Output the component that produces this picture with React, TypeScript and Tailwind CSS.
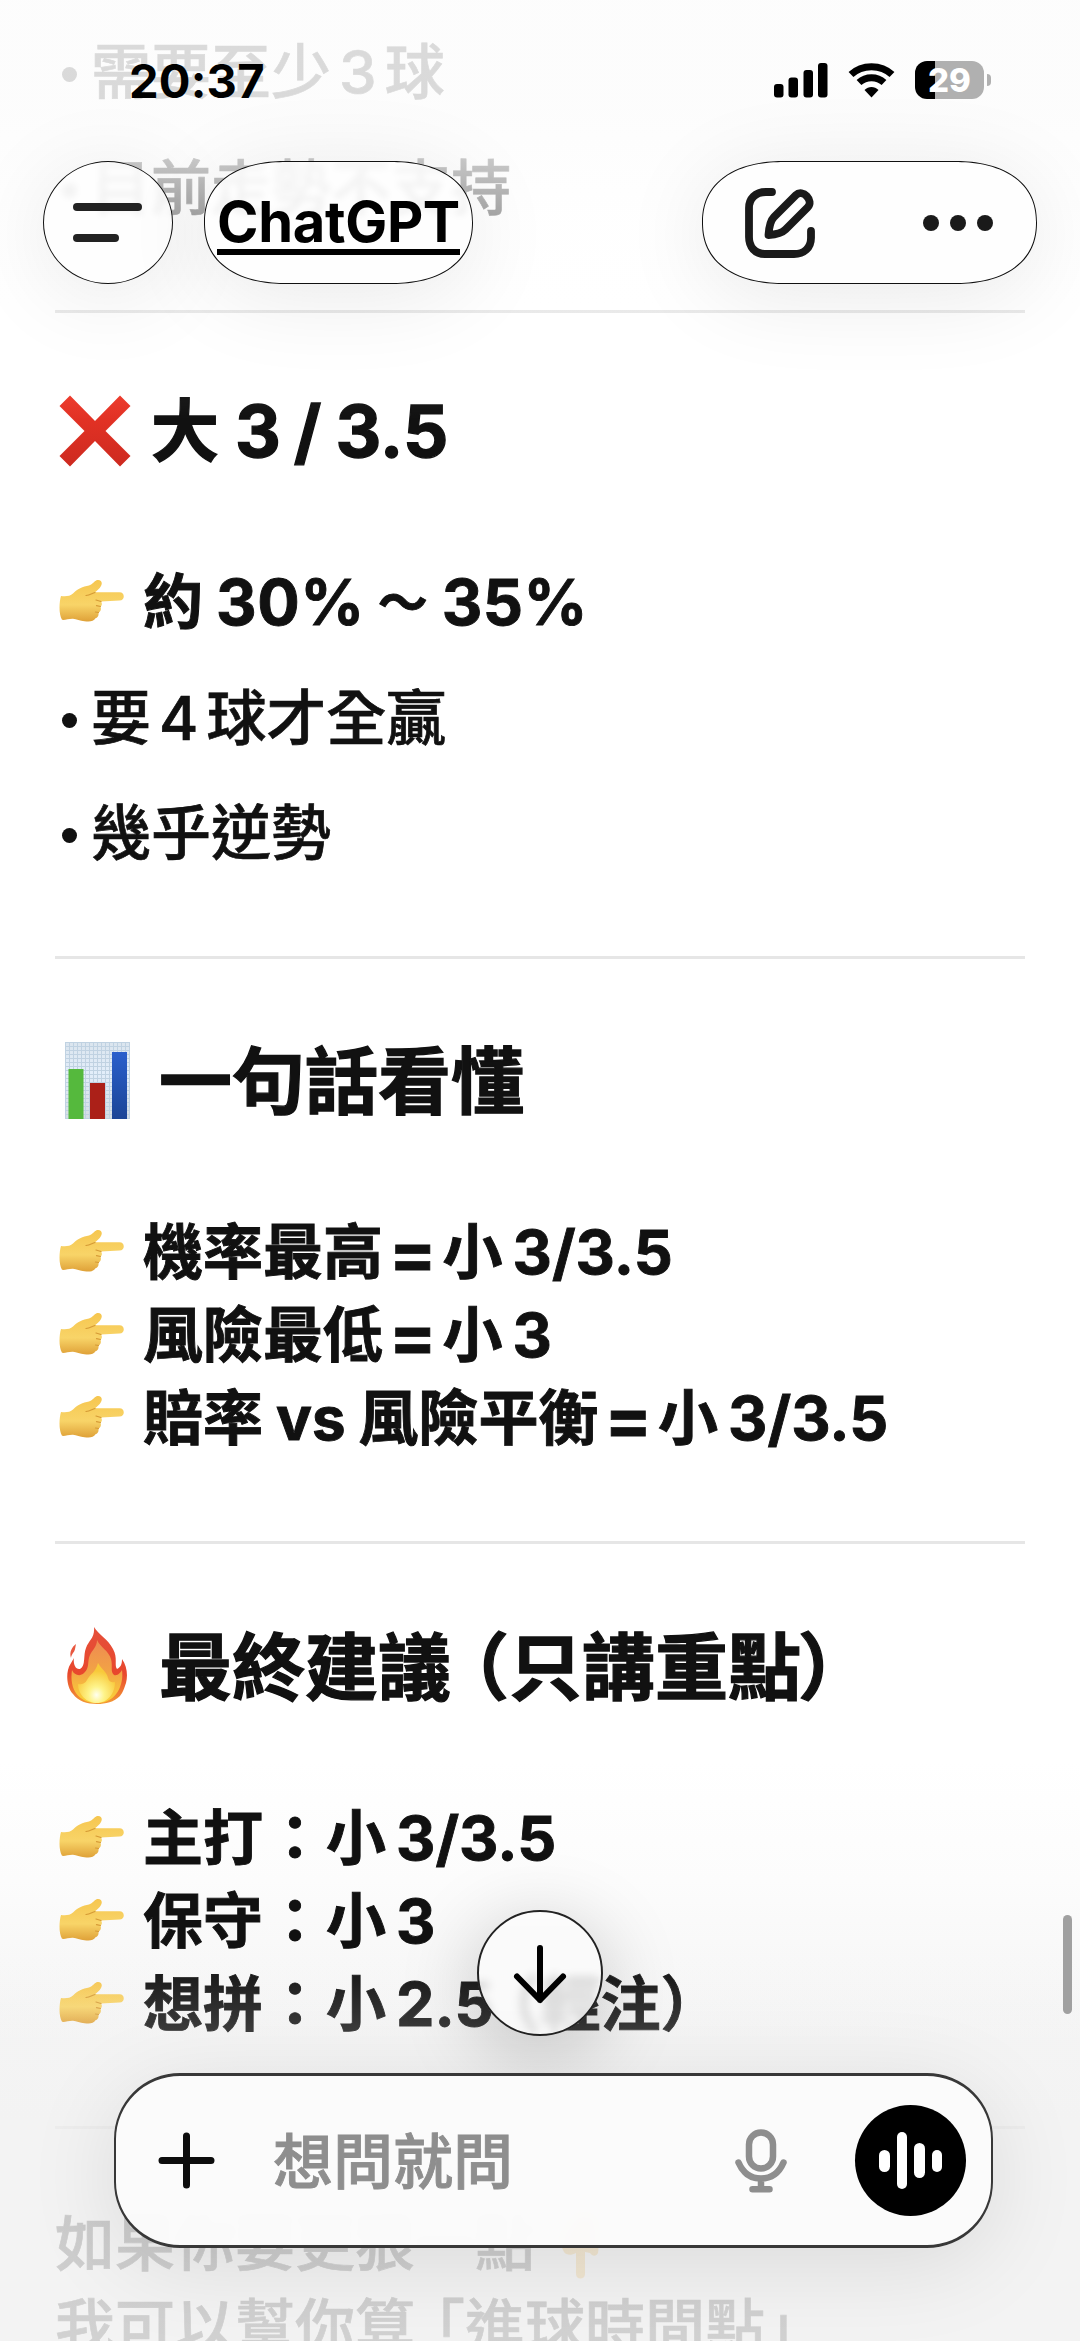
import { ReactNode } from "react";

interface RowProps {
  children: ReactNode;
  className?: string;
}

const PointRight = () => (
  <svg width="66" height="44" viewBox="0 0 66 44" className="mb-[3px] ml-[4px] mr-[18px] shrink-0">
    <defs>
      <linearGradient id="skin" x1="0" y1="0" x2="0" y2="1">
        <stop offset="0" stopColor="#f6c64f" />
        <stop offset="0.6" stopColor="#f8d468" />
        <stop offset="1" stopColor="#dfa138" />
      </linearGradient>
    </defs>
    <path
      d="M2 17c4 .8 9 .4 12-2.400C18 10 24 7.500 30 6.500c3-1 5-4 8-5.500 4-.8 6 2.500 4 6-1.500 3-4 4.500-6 6.300h24.500c5.700 0 5.700 8.200 0 8.200L42 22.500c1.500 2 1 4-.5 5 1 3 0 5-2 6 .5 3-1 5-3 5.800-2 3.500-6 3.500-11 3-4.500-.3-8-2-11.500-2.500-4-.2-8 1.500-11 1C-.3 35 0 24 2 17z"
      fill="url(#skin)"
    />
    <path d="M36 13.500c-3 .8-5 2.500-9 3M42 22.500l-5-1.500M41.500 27.500l-4-.8M39.500 33.500l-3-.5" stroke="#d59a35" strokeWidth="1.200" fill="none" strokeLinecap="round" />
  </svg>
);

const PointDown = () => (
  <svg width="44" height="66" viewBox="0 0 44 66" className="ml-[22px] mt-[4px] shrink-0">
    <path d="M17 2c7-2 14-1 22 1-1 8 3 13 2 21 0 5 1 12 0 16-2 4-6 3-8 0l-5-1v22c0 6-9 6-9 0V40c-5 3-10 2-12-1-4-6-4-15-1-20 3-4 9-11 11-16z" fill="#e9a52a" />
  </svg>
);

const Cross = () => (
  <svg width="72" height="72" viewBox="0 0 72 72" className="mb-[2px] ml-[4px] mr-[20px] shrink-0">
    <defs>
      <linearGradient id="cross" x1="0" y1="0" x2="0" y2="1">
        <stop offset="0" stopColor="#ec3526" />
        <stop offset="1" stopColor="#cd2a20" />
      </linearGradient>
    </defs>
    <path d="M11 .5L36 26 61 .5 71.500 11 46.500 36l25 25L61 71.500 36 46 11 71.500.5 61l25-25-25-25z" fill="url(#cross)" />
  </svg>
);

const BarChart = () => (
  <svg width="65" height="77" viewBox="0 0 65 77" className="mb-[3px] ml-[10px] mr-[29px] shrink-0">
    <defs>
      <pattern id="grid" width="4" height="4" patternUnits="userSpaceOnUse">
        <path d="M0 .5H4M.5 0V4" stroke="#c0d2e2" strokeWidth="1" />
      </pattern>
      <linearGradient id="paper" x1="0" y1="0" x2="0" y2="1">
        <stop offset="0" stopColor="#dbe5ee" />
        <stop offset="0.4" stopColor="#e3eefa" />
        <stop offset="1" stopColor="#d5dde3" />
      </linearGradient>
      <linearGradient id="blue" x1="0" y1="0" x2="0" y2="1">
        <stop offset="0" stopColor="#2a5fcc" />
        <stop offset="1" stopColor="#1c4596" />
      </linearGradient>
    </defs>
    <rect width="65" height="77" fill="url(#paper)" />
    <rect width="65" height="77" fill="url(#grid)" />
    <rect x="3.500" y="27" width="15" height="50" fill="#55b93d" />
    <rect x="25" y="41" width="15" height="36" fill="#ab2018" />
    <rect x="47" y="10" width="15" height="67" fill="url(#blue)" />
  </svg>
);

const Flame = () => (
  <svg width="60" height="77" viewBox="0 0 60 77" className="mb-[4px] ml-[12px] mr-[32px] shrink-0">
    <defs>
      <linearGradient id="outer" x1="0" y1="0" x2="0" y2="1">
        <stop offset="0" stopColor="#e5503a" />
        <stop offset="0.6" stopColor="#e8472d" />
        <stop offset="1" stopColor="#f39a35" />
      </linearGradient>
      <linearGradient id="inner" x1="0" y1="0" x2="0" y2="1">
        <stop offset="0" stopColor="#ee8a52" />
        <stop offset="0.5" stopColor="#f2a345" />
        <stop offset="1" stopColor="#fbd437" />
      </linearGradient>
      <radialGradient id="core" cx="0.5" cy="0.8" r="0.6">
        <stop offset="0" stopColor="#fffff0" />
        <stop offset="0.35" stopColor="#fef48a" />
        <stop offset="1" stopColor="#f8c93a" />
      </radialGradient>
    </defs>
    <path d="M27 0c4 7 14 12 19 22 5 9 1 16 4 20 4-2 5-5 5-10 5 7 6 16 4 24-2 6-3 9-6 13-6 6-14 8-23 8-10 0-19-3-24-10-5-5-7-16-5-24 1-5 4-8 6-12-1 5 1 12 6 11 6-3 3-14 6-21 3-8 9-10 8-21z" fill="url(#outer)" />
    <path d="M9 17c-1 5-1 7-3 9-1 2-2 3-2 5-2-6 1-11 5-14z" fill="#e8573f" />
    <path d="M30 13c3 7 12 11 14 19 2 8-1 12 3 16 4 1 6-2 8-5 2 14-5 33-25 33C12 76 2 63 5 43c2 5 8 7 12 3 6-5 3-12 6-18 2-5 7-8 7-15z" fill="url(#inner)" />
    <path d="M31 36c3 6 9 9 10 15 1 4 4 5 7 4 0 12-8 21-18 21S11 68 11 57c3 1 7 0 9-4 3-6 9-8 11-17z" fill="url(#core)" />
  </svg>
);

const Divider = ({ className = "" }: { className?: string }) => (
  <div className={`h-[3px] w-[970px] shrink-0 bg-[#e6e6e6] ${className}`} />
);

const Heading = ({ children, className = "text-[73px]" }: RowProps) => (
  <h2 className={`flex h-[100px] shrink-0 items-center whitespace-nowrap pt-[3px] font-bold leading-[97px] [-webkit-text-stroke:1.3px_#111] ${className}`}>{children}</h2>
);

const Line = ({ children, className = "font-bold [-webkit-text-stroke:0.9px_#111]" }: RowProps) => (
  <p className={`flex h-[83px] shrink-0 items-center whitespace-nowrap pt-[3px] text-[60px] leading-[80px] ${className}`}>{children}</p>
);

const Bullet = ({ children, className = "" }: RowProps) => (
  <div className={`flex h-[83px] shrink-0 items-center whitespace-nowrap pt-[2px] text-[60px] font-medium leading-[81px] [-webkit-text-stroke:0.7px_#111] ${className}`}>
    <span className="ml-[7px] mr-[14px] mt-[4px] size-[15px] rounded-full bg-current" />
    {children}
  </div>
);

// Latin run inside a Chinese line
const Num = ({ children, className = "ml-[10px] mr-[9px] text-[61px]" }: RowProps) => <span className={className}>{children}</span>;

const Equals = () => <span className="mx-[6px] mt-[2px] text-[70px] font-bold">=</span>;

const Colon = () => <span className="ml-[2px] mr-[1px]">：</span>;

const Messages = () => (
  <main className="flex h-full flex-col overflow-hidden pl-[55px] pt-[30px] text-[#111]">
    <Bullet>需要至少<Num className="mx-[8px]">3</Num>球</Bullet>
    <Bullet className="mt-[33px]">目前走勢不支持</Bullet>
    <Divider className="mt-[81px]" />

    <Heading className="mt-[67px] text-[68px]">
      <Cross />大<Num className="ml-[16px] mr-[13px] text-[71px]">3</Num><span className="text-[71px]">/</span><Num className="ml-[14px] text-[71px]">3.5</Num>
    </Heading>
    <Line className="mt-[79px] font-bold [-webkit-text-stroke:0.9px_#111]">
      <PointRight />約
      <Num className="ml-[13px] text-[63px] tracking-[0.5px]">30%</Num>
      <span className="ml-[13px] mr-[14px] mt-[2px] text-[50px]">〜</span>
      <Num className="text-[63px] tracking-[0.5px]">35%</Num>
    </Line>
    <Bullet className="mt-[34px]">要<Num className="mx-[8px]">4</Num>球才全贏</Bullet>
    <Bullet className="mt-[32px]">幾乎逆勢</Bullet>
    <Divider className="mt-[82px]" />

    <Heading className="mt-[71px] text-[73px]"><BarChart />一句話看懂</Heading>
    <Line className="mt-[79px] font-bold [-webkit-text-stroke:0.9px_#111]"><PointRight />機率最高<Equals />小<Num>3/3.5</Num></Line>
    <Line><PointRight />風險最低<Equals />小<Num>3</Num></Line>
    <Line><PointRight />賠率<Num className="mx-[13px] text-[60px]">vs</Num>風險平衡<Equals />小<Num>3/3.5</Num></Line>
    <Divider className="mt-[83px]" />

    <Heading className="mt-[72px] text-[73px]">
      <Flame />最終建議<span className="-ml-[15px]">（</span>只講重點<span className="-ml-[3px]">）</span>
    </Heading>
    <Line className="mt-[79px] font-bold [-webkit-text-stroke:0.9px_#111]"><PointRight />主打<Colon />小<Num>3/3.5</Num></Line>
    <Line><PointRight />保守<Colon />小<Num>3</Num></Line>
    <Line><PointRight />想拼<Colon />小<Num>2.5</Num><span className="-ml-[22px]">（</span>輕注<span>）</span></Line>
    <Divider className="mt-[82px]" />

    <Line className="mt-[72px] font-medium [-webkit-text-stroke:0.7px_#111]">如果你要更狠一點<PointDown /></Line>
    <Line className="font-medium [-webkit-text-stroke:0.7px_#111]">我可以幫你算<span className="-ml-[10px]">「</span>進球時間點<span>」</span></Line>
  </main>
);

const StatusBar = () => (
  <div className="flex h-[161px] items-start pl-[129px] pr-[89px] pt-[61px] text-black">
    <span className="mt-[-2px] text-[47px] font-bold leading-[44px] tracking-[0.2px]">20:37</span>
    <svg width="54" height="36" viewBox="0 0 54 36" className="ml-auto mt-[1px]">
      <rect x="0" y="22" width="9.500" height="13.500" rx="3" />
      <rect x="14.500" y="15.500" width="9.500" height="20" rx="3" />
      <rect x="29.500" y="8" width="9.500" height="27.500" rx="3" />
      <rect x="44" y="1" width="9.500" height="34.500" rx="3" />
    </svg>
    <svg width="47" height="36" viewBox="0 0 47 36" className="ml-[20px] mt-[1px]">
      <path d="M3 12.500C14 2 33 2 44 12.500M11 20.500c7-6.500 18-6.500 25 0" fill="none" stroke="#000" strokeWidth="7" />
      <path d="M16.500 28c4-4 10-4 14 0l-7 7.500z" />
    </svg>
    <div className="ml-[20px] flex h-[38px] w-[69px] items-center justify-center rounded-[12px] bg-[linear-gradient(90deg,#000_20.500px,#b0b0b0_20.500px)]">
      <span className="text-[33px] font-extrabold leading-[38px] text-white">29</span>
    </div>
    <div className="ml-[3px] mt-[13px] h-[12px] w-[4px] rounded-r-full bg-[#b0b0b0]" />
  </div>
);

const glass = "border border-[#111] bg-[#fefefe]/85 backdrop-blur-[3px] shadow-[0_12px_90px_rgba(0,0,0,0.09)]";

const TopBar = () => (
  <div className="flex items-center pl-[43px]">
    <button className={`flex h-[123px] w-[130px] flex-col items-start justify-center gap-[23px] rounded-[50%] pl-[29px] ${glass}`}>
      <span className="h-[8px] w-[69px] rounded-full bg-[#222]" />
      <span className="h-[8px] w-[46px] rounded-full bg-[#222]" />
    </button>
    <button className={`ml-[31px] flex h-[123px] w-[269px] items-center justify-center rounded-[84px/62px] [corner-shape:superellipse(1.2)] ${glass}`}>
      <span className="mt-[5px] border-b-[6px] border-black text-[56px] font-bold leading-[54px] tracking-[-0.3px] text-black">ChatGPT</span>
    </button>
    <div className={`ml-[229px] flex h-[123px] w-[335px] items-center rounded-[84px/62px] pl-[42px] [corner-shape:superellipse(1.2)] ${glass}`}>
      <svg width="70" height="70" viewBox="0 0 70 70" fill="none" stroke="#1a1a1a" strokeWidth="7.800" strokeLinecap="round" strokeLinejoin="round">
        <path d="M27 4h-6C10 4 4 11 4 20v29c0 10 6 17 16 17h29c10 0 17-6 17-16v-7" />
        <path d="M51 7L29 29c-4 4-5 10-5.500 18 8-.5 13-1.500 17-5.500l22-22c7-7-5-19-11.500-12.500z" />
      </svg>
      <div className="ml-[108px] flex gap-[11px]">
        <span className="size-[16px] rounded-full bg-[#1a1a1a]" />
        <span className="size-[16px] rounded-full bg-[#1a1a1a]" />
        <span className="size-[16px] rounded-full bg-[#1a1a1a]" />
      </div>
    </div>
  </div>
);

const Composer = () => (
  <div className="flex h-[175px] w-[879px] items-center rounded-[66px] border-x-[2px] border-y-[3px] border-[#383838] bg-[#fbfbfb]/96 pl-[42px] pr-[25px] shadow-[0_16px_90px_rgba(0,0,0,0.10)] backdrop-blur-[4px]">
    <svg width="57" height="57" viewBox="0 0 57 57" stroke="#0d0d0d" strokeWidth="7" strokeLinecap="round">
      <path d="M28.500 4v49M4 28.500h49" />
    </svg>
    <span className="ml-[58px] mt-[3px] text-[60px] font-medium leading-[83px] text-[#8e8e8e] [-webkit-text-stroke:0.9px_#8e8e8e]">想問就問</span>
    <svg width="52" height="64" viewBox="0 0 52 64" className="ml-auto" fill="none" stroke="#8e8e8e" strokeWidth="6.500" strokeLinecap="round">
      <rect x="14" y="3.500" width="24" height="36" rx="12" />
      <path d="M3.500 33.500C8 44 16 49.500 26 49.500S44 44 48.500 33.500M26 50v10M17.500 60.200h17" />
    </svg>
    <button className="ml-[68px] flex size-[111px] items-center justify-center gap-[7px] rounded-full bg-black">
      <span className="h-[22px] w-[10.500px] rounded-full bg-white" />
      <span className="h-[57px] w-[10.500px] rounded-full bg-white" />
      <span className="h-[35px] w-[10.500px] rounded-full bg-white" />
      <span className="h-[22px] w-[10.500px] rounded-full bg-white" />
    </button>
  </div>
);

export default function App() {
  return (
    <div className="relative h-[2341px] w-[1080px] overflow-hidden bg-[linear-gradient(180deg,#fff_1760px,#fcfcfc_1880px,#f8f8f8_1960px,#f4f4f4_2040px,#f3f3f3_2120px)] font-['Inter','Noto_Sans_CJK_TC',sans-serif] [font-optical-sizing:none]">
      <Messages />

      {/* header over the scrolled conversation */}
      <header className="absolute inset-x-0 top-0 h-[420px] bg-[linear-gradient(180deg,rgba(252,252,252,0.86)_0px,rgba(252,252,252,0.85)_110px,rgba(253,253,253,0.78)_160px,rgba(254,254,254,0.63)_215px,rgba(255,255,255,0.15)_310px,rgba(255,255,255,0)_420px)]">
        <StatusBar />
        <TopBar />
      </header>

      <footer className="absolute inset-x-0 bottom-0 flex h-[431px] flex-col items-center bg-[linear-gradient(180deg,rgba(243,243,243,0)_40px,rgba(243,243,243,0.06)_70px,rgba(243,243,243,0.2)_125px,rgba(243,243,243,0.82)_290px,rgba(243,243,243,0.85)_431px)]">
        <button className="flex size-[126px] shrink-0 items-center justify-center rounded-full border-[2px] border-[#222] bg-[#fafafa]/85 shadow-[0_16px_80px_rgba(0,0,0,0.22)] backdrop-blur-[4px]">
          <svg width="56" height="62" viewBox="0 0 56 62" fill="none" stroke="#000" strokeWidth="6" strokeLinecap="round" strokeLinejoin="round">
            <path d="M28 6v52M5 34.500L28 58l23-23.500" />
          </svg>
        </button>
        <div className="ml-[27px] mt-[37px]">
          <Composer />
        </div>
      </footer>

      <div className="absolute right-[8px] top-[1915px] h-[99px] w-[9px] rounded-full bg-[#a0a0a0]" />
    </div>
  );
}
